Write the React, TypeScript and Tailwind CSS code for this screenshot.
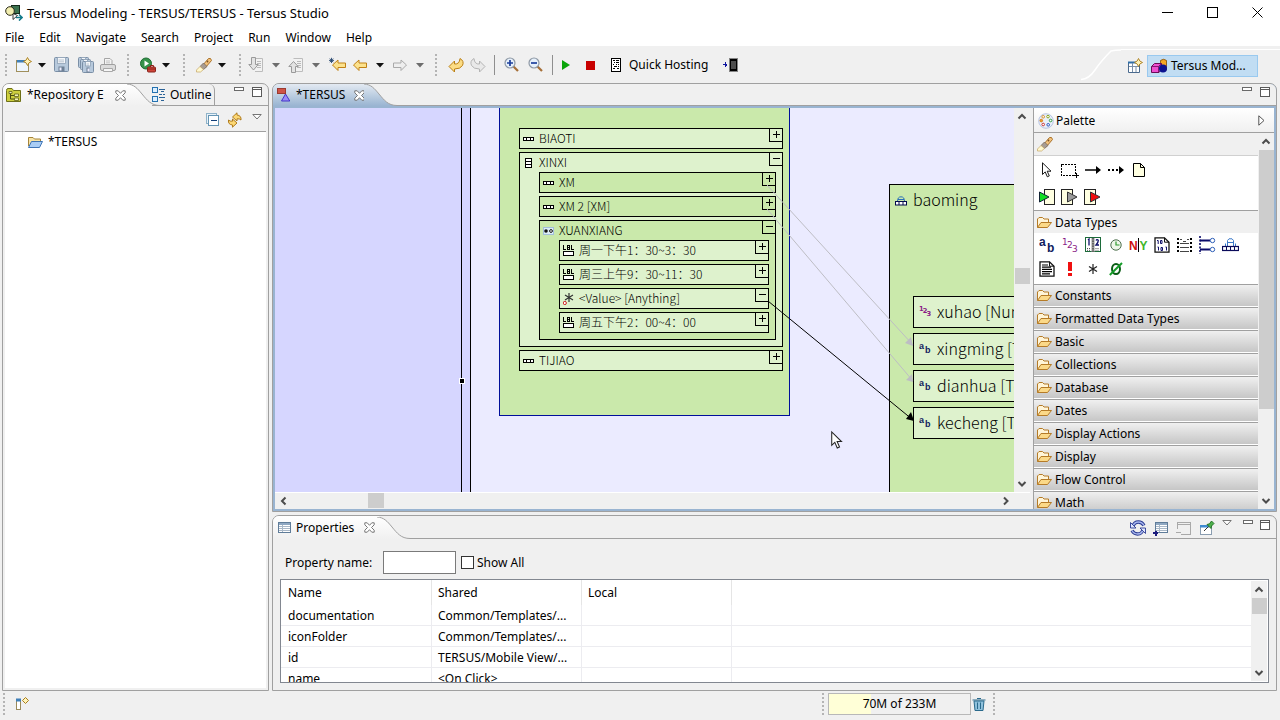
import type { ReactNode } from "react";

/* ---------- small drawing helpers ---------- */

function Svg({ children, w = 16, h = 16, smooth = false }: { children: ReactNode; w?: number; h?: number; smooth?: boolean }) {
  return (
    <svg
      width={w}
      height={h}
      viewBox={`0 0 ${w} ${h}`}
      fill="none"
      shapeRendering={smooth ? "auto" : "crispEdges"}
      className="block shrink-0"
      aria-hidden="true"
    >
      {children}
    </svg>
  );
}

const Caret = ({ dim = false }: { dim?: boolean }) => (
  <Svg w={8} h={5} smooth>
    <path d="M0 0H8L4 4.5Z" fill={dim ? "#6d6d6d" : "#111"} />
  </Svg>
);

const Grip = () => (
  <Svg w={3} h={22}>
    {[0, 4, 8, 12, 16, 20].map((y) => (
      <rect key={y} x="0" y={y} width="2" height="2" fill="#b4b4b4" />
    ))}
  </Svg>
);

const AppLogo = () => (
  <Svg w={18} h={16} smooth>
    <rect x="6.500" y=".5" width="8" height="8" fill="#3c7350" stroke="#152b1b" />
    <path d="M8 8.500V14.500L12.500 10.500Z" fill="#fff" stroke="#222" strokeWidth=".9" />
    <circle cx="5" cy="6" r="4.300" fill="#f2eeb0" stroke="#2c2c1a" />
    <path d="M11 12.500H17M14 9.500L17.200 12.500L14 15.500" stroke="#127a8a" strokeWidth="1.600" />
  </Svg>
);

const Sparkle = ({ x, y }: { x: number; y: number }) => (
  <path
    d={`M${x} ${y - 4}L${x + 1.4} ${y - 1.4}L${x + 4} ${y}L${x + 1.4} ${y + 1.4}L${x} ${y + 4}L${x - 1.4} ${y + 1.4}L${x - 4} ${y}L${x - 1.4} ${y - 1.4}Z`}
    fill="#fff3b8"
    stroke="#a87d1c"
    strokeWidth=".9"
  />
);

const NewIcon = () => (
  <Svg smooth>
    <rect x=".5" y="3.500" width="12" height="11" fill="#eef6fd" stroke="#a08f5c" />
    <rect x="1" y="3" width="11" height="2.500" fill="#3f7fb8" />
    <Sparkle x={11.5} y={4.5} />
  </Svg>
);

const Disk = ({ x = 0, y = 0, s = 14 }: { x?: number; y?: number; s?: number }) => (
  <g transform={`translate(${x} ${y})`}>
    <rect x=".5" y=".5" width={s} height={s} rx="1" fill="#b7c9dc" stroke="#7b8fa6" />
    <rect x="3.500" y=".5" width={s - 6} height={s / 2 - 1} fill="#f5f7fa" stroke="#8fa2b6" strokeWidth=".8" />
    <path d={`M4.500 3H${s - 4}M4.500 4.800H${s - 4}`} stroke="#a0b0c0" strokeWidth=".7" />
    <rect x="4.500" y={s - 4.5} width={s - 8} height="5" fill="#6f8196" />
    <rect x="5.500" y={s - 3.5} width="2" height="3" fill="#eef" />
  </g>
);
const SaveIcon = () => (
  <Svg smooth>
    <Disk />
  </Svg>
);
const SaveAllIcon = () => (
  <Svg smooth>
    <Disk s={10} />
    <Disk x={2} y={2} s={10} />
    <Disk x={4} y={4} s={11} />
  </Svg>
);
const PrintIcon = () => (
  <Svg smooth>
    <path d="M4.500 7V1.500H10L12 3.500V7" fill="#f4f4f4" stroke="#a5a5a5" />
    <path d="M6 4h4M6 5.800h4" stroke="#bbb" strokeWidth=".8" />
    <rect x=".5" y="7.500" width="15" height="6" rx="1.500" fill="#dcdcdc" stroke="#a0a0a0" />
    <path d="M3.500 11.500h9v3h-9z" fill="#f6f6f6" stroke="#a8a8a8" />
  </Svg>
);
const RunIcon = () => (
  <Svg smooth>
    <circle cx="6" cy="6.500" r="5.500" fill="#35924a" stroke="#1f6d33" />
    <path d="M4.500 3.500L9 6.500L4.500 9.500Z" fill="#fff" />
    <path d="M10.500 10V8.500H13.500V10" stroke="#8e2018" />
    <rect x="7.500" y="10" width="8" height="5" rx="1" fill="#cf4438" stroke="#86231b" />
    <path d="M8 12h7" stroke="#7a1c14" strokeWidth=".8" />
  </Svg>
);
const TorchIcon = () => (
  <Svg smooth>
    <path d="M6.500 8.500L12.500 1.500Q15 .5 15.500 3.500L9.500 10.500Z" fill="#f3c27c" stroke="#a9722b" />
    <path d="M4 9.500L7.500 6L11 9.500L7.500 12.500Z" fill="#a79c92" stroke="#7a6a5c" strokeWidth=".8" />
    <path d="M4 9.500L7.500 12.500L4.500 15H.5V13Z" fill="#fff9cf" stroke="#c4a564" strokeWidth=".7" />
    <circle cx="11.500" cy="4.500" r=".9" fill="#7a5326" />
  </Svg>
);
const PageArrow = ({ up = false }: { up?: boolean }) => (
  <Svg smooth>
    <path d="M5.500 1.500H14.500V14.500H7" fill="#f2f2f2" stroke="#bcbcbc" />
    <path d="M9 4.500h4M9 6.500h4M9 8.500h4M9 10.500h4" stroke="#b9b9b9" />
    {up ? (
      <path d="M3.500 15.500V9.500H.8L5.500 4.500L10.200 9.500H7.500V15.500Z" fill="#e3e3e3" stroke="#9a9a9a" />
    ) : (
      <path d="M3.500 .5V7.500H.8L5.500 13L10.200 7.500H7.500V.5Z" fill="#e3e3e3" stroke="#9a9a9a" />
    )}
  </Svg>
);
const ArrowLeft = ({ star = false }: { star?: boolean }) => (
  <Svg w={18} smooth>
    <path d="M2.500 8L8 3V6H15.500V10.500H8V13.500Z" fill="#fce28d" stroke="#c08116" transform={star ? "translate(1 0)" : undefined} />
    {star && <path d="M2.500 .8V6M0 3.400H5M.8 1.600L4.200 5.200M4.200 1.600L.8 5.200" stroke="#26466e" strokeWidth=".9" />}
  </Svg>
);
const ArrowRight = () => (
  <Svg smooth>
    <path d="M14.500 8L9 3V6H1.500V10.500H9V13.500Z" fill="#eeeeee" stroke="#a9a9a9" />
  </Svg>
);
const HookLeft = () => (
  <Svg smooth>
    <path d="M1 9.500L6.500 4V7Q11.500 7.500 12 1.500Q16.500 4 14.500 8.500Q12.500 12 6.500 12V15Z" fill="#fbdc85" stroke="#bb8014" />
  </Svg>
);
const HookRight = () => (
  <Svg smooth>
    <path d="M15 9.500L9.500 4V7Q4.500 7.500 4 1.500Q-.5 4 1.500 8.500Q3.500 12 9.500 12V15Z" fill="#e9e9e9" stroke="#b4b4b4" />
  </Svg>
);
const Lens = ({ plus = false }: { plus?: boolean }) => (
  <Svg smooth>
    <path d="M9.500 9.500L14 14" stroke="#a66f38" strokeWidth="2.200" />
    <circle cx="6" cy="6" r="5" fill="#e6f0fb" stroke="#8f99a5" strokeWidth="1.200" />
    <path d={plus ? "M3 6H9M6 3V9" : "M3 6H9"} stroke="#1d3f9c" strokeWidth="1.700" />
  </Svg>
);
const PlayIcon = () => (
  <Svg w={10} h={10} smooth>
    <path d="M1 0L9 5L1 10Z" fill="#0aa50a" />
  </Svg>
);
const StopIcon = () => (
  <Svg w={9} h={9}>
    <rect width="9" height="9" fill="#c80000" />
  </Svg>
);
const ServerIcon = () => (
  <Svg w={12} h={14}>
    <rect x="1.500" y=".5" width="9" height="13" fill="#fff" stroke="#000" />
    <path d="M3 2.500h2M6 2.500h3M4 4.500h1M6 4.500h3M3 6.500h1M6 6.500h1M8 6.500h1M4 8.500h3M8 8.500h1M3 10.500h2M7 10.500h2" stroke="#000" />
  </Svg>
);
const DeviceIcon = () => (
  <Svg w={16} h={14}>
    <rect x="6" y="0" width="9" height="14" fill="#858585" />
    <rect x="7" y="1" width="7" height="12" fill="#000" />
    <rect x="8" y="3" width="5" height="8" fill="#4d4d4d" />
    <path d="M0 6.500H3M2.500 4V9M3.500 5.500V7.500" stroke="#1017a0" />
  </Svg>
);
const PerspectiveIcon = () => (
  <Svg smooth>
    <path d="M1.500 4.500H12.500V14.500H1.500Z" fill="#fff" stroke="#4a6a8e" />
    <path d="M1 4.500H9" stroke="#2f6ea8" strokeWidth="2" />
    <path d="M5.500 5V14M2 8.500H12M9 8.500V14" stroke="#7b90a8" />
    <Sparkle x={11.5} y={4.5} />
  </Svg>
);
const ModelIcon = () => (
  <Svg w={17} h={16} smooth>
    <path d="M9.500 2.500Q12.500 0 15.500 2.500V12H9.500Z" fill="#f5a623" stroke="#7c4a05" strokeWidth=".8" />
    <path d="M.5 8.500L3.500 5.500H10.500V11L8 14.500H.5Z" fill="#ee4fd0" stroke="#6a0d57" />
    <path d="M.5 8.500H7.500V14.500M7.500 8.500L10.500 5.500" stroke="#6a0d57" strokeWidth=".8" />
    <circle cx="12" cy="10.500" r="4" fill="#0b1290" />
  </Svg>
);
const CloseTab = () => (
  <Svg w={11} h={11} smooth>
    <path
      d="M.8 .8H3.200L5.500 3.300L7.800 .8H10.200V2.800L7.500 5.500L10.200 8.200V10.200H7.800L5.500 7.700L3.200 10.200H.8V8.200L3.500 5.500L.8 2.800Z"
      fill="#fff"
      stroke="#6a6a6a"
      strokeWidth=".9"
    />
  </Svg>
);
const MinBox = () => (
  <Svg w={10} h={10}>
    <rect x=".5" y=".5" width="9" height="3" fill="#fff" stroke="#6a6a6a" />
  </Svg>
);
const MaxBox = () => (
  <Svg w={10} h={10}>
    <rect x=".5" y=".5" width="9" height="9" fill="#fff" stroke="#5a5a5a" />
    <path d="M0 2.500H10" stroke="#5a5a5a" />
  </Svg>
);
const ViewMenu = () => (
  <Svg w={10} h={6} smooth>
    <path d="M.8 .5H9.200L5 5Z" fill="#fff" stroke="#666" strokeWidth=".9" />
  </Svg>
);
const RepoIcon = () => (
  <Svg smooth>
    <path d="M.5 3.500Q.5 1.500 2 1.500H6L7.500 3.500H14.500V14.500H.5Z" fill="#cdcf3f" stroke="#6e7018" />
    <path d="M4.500 5.500V12H8M4.500 8.500H8" stroke="#4a4c10" />
    <path d="M3 4.500h3v2H3zM8.500 7h4v2.500h-4zM8.500 11h4v2.500h-4z" fill="#f4f5b8" stroke="#5f611a" strokeWidth=".8" />
  </Svg>
);
const OutlineIcon = () => (
  <Svg w={14} h={15}>
    <rect x=".5" y=".5" width="5" height="5" fill="#dcefff" stroke="#2472b0" />
    <rect x=".5" y="9.500" width="5" height="5" fill="#dcefff" stroke="#2472b0" />
    <path d="M7 2.500H13M9 4.500H12M7 7.500H10M11 7.500H13M7 10.500H13M9 13.500H12" stroke="#2b6296" />
  </Svg>
);
const CollapseIcon = () => (
  <Svg w={14} h={14}>
    <rect x=".5" y=".5" width="10" height="10" fill="#e9f2f9" stroke="#8fb3c9" />
    <rect x="2.500" y="2.500" width="10" height="10" fill="#fff" stroke="#6595b4" />
    <path d="M5 7.500H11" stroke="#123f78" strokeWidth="1" />
  </Svg>
);
const LinkIcon = () => (
  <Svg smooth>
    <path d="M5.500 5L10 .8V3Q14.500 3.500 14 8Q12.500 6.500 10 6.800V9Z" fill="#fbd774" stroke="#a9720f" strokeWidth=".9" />
    <path d="M10 11L5.500 15.200V13Q.8 12.500 1.500 8Q3 9.500 5.500 9.200V7Z" fill="#fbd774" stroke="#a9720f" strokeWidth=".9" />
  </Svg>
);
const ProjectFolder = () => (
  <Svg smooth>
    <path d="M1.500 12V3.500H6L7.500 5H13.500V8" fill="#f7e3a5" stroke="#a5843a" />
    <path d="M1.500 13.500L4.500 7.500H15.500L12.500 13.500Z" fill="#a9cdf5" stroke="#3e74b5" />
  </Svg>
);
const ModelTabIcon = () => (
  <Svg w={14} h={14} smooth>
    <rect x=".5" y=".5" width="8" height="5" fill="#cf5346" stroke="#9b3a30" />
    <path d="M8.500 6L12.800 13H4.500Z" fill="#9a8cf5" stroke="#4334c8" />
  </Svg>
);
const PropsIcon = ({ mark = false }: { mark?: boolean }) => (
  <Svg w={16} h={16}>
    <rect x="2.500" y="2.500" width="12" height="10" fill="#fff" stroke="#5f7c99" />
    <rect x="3" y="3" width="11" height="2" fill="#8fa8c2" />
    <path d="M3 6.500H14M3 8.500H14M3 10.500H14M6.500 5V12" stroke="#a9b8c8" />
    {mark && <path d="M0 13H5M2.500 11V16" stroke="#1b1b7d" strokeWidth="2" />}
  </Svg>
);
const MinusPane = () => (
  <Svg>
    <path d="M1.500 9V2.500H14.500V14.500H5" stroke="#a9a9a9" />
    <path d="M2 4.500H14M0 12.500H5" stroke="#a9a9a9" />
  </Svg>
);
const RefreshIcon = () => (
  <Svg smooth>
    <path d="M3 6.500Q4 2 8.500 2Q12 2 14 5.500" stroke="#2c3c92" strokeWidth="3.400" />
    <path d="M3 6.500Q4 2 8.500 2Q12 2 14 5.500" stroke="#a9b8f0" strokeWidth="1.400" />
    <path d="M13 9.500Q12 14 7.500 14Q4 14 2 10.500" stroke="#2c3c92" strokeWidth="3.400" />
    <path d="M13 9.500Q12 14 7.500 14Q4 14 2 10.500" stroke="#a9b8f0" strokeWidth="1.400" />
    <path d="M.5 2.500V8H6ZM15.500 13.500V8H10Z" fill="#dfe6ff" stroke="#2c3c92" strokeWidth=".9" />
  </Svg>
);
const PinIcon = () => (
  <Svg smooth>
    <rect x="1.500" y="5.500" width="11" height="9" fill="#fff" stroke="#8a9db0" />
    <rect x="1" y="5" width="9" height="2.500" fill="#3f8ad0" />
    <path d="M5 11L9.500 6.500" stroke="#333" />
    <path d="M8 4.500L12 8.500L12.500 6L15 3.500L12.500 1L10.500 3.800Z" fill="#4db04d" stroke="#1c6b1c" strokeWidth=".9" />
  </Svg>
);
const Chevron = ({ dir }: { dir: "up" | "down" | "left" | "right" }) => {
  const d = {
    up: "M1.500 6.500L5 3L8.500 6.500",
    down: "M1.500 3L5 6.500L8.500 3",
    left: "M6.500 1.500L3 5L6.500 8.500",
    right: "M3 1.500L6.500 5L3 8.500",
  }[dir];
  return (
    <Svg w={10} h={10} smooth>
      <path d={d} stroke="#4c4c4c" strokeWidth="2" />
    </Svg>
  );
};
const PaletteIcon = () => (
  <Svg smooth>
    <circle cx="8" cy="8" r="7.300" fill="#e9effa" stroke="#a9b9dd" strokeWidth=".8" />
    <circle cx="5.200" cy="3.800" r="1.300" fill="#fff" stroke="#d68f2a" />
    <circle cx="10" cy="3.600" r="1.300" fill="#fff" stroke="#8aa81e" />
    <circle cx="12.600" cy="7.500" r="1.300" fill="#fff" stroke="#2d9c3d" />
    <circle cx="10.200" cy="11.800" r="1.300" fill="#fff" stroke="#2757c4" />
    <circle cx="5.200" cy="11.500" r="1.300" fill="#fff" stroke="#c93434" />
    <circle cx="3.300" cy="7.600" r="1.300" fill="#f0a030" stroke="#d6801a" />
  </Svg>
);
const DrawerFolder = () => (
  <Svg smooth>
    <path d="M1.500 12.500V4L3 2.500H6.500L8 4H12.500V7" fill="#fff5d8" stroke="#b57b27" />
    <path d="M1.500 12.500L5 7.500H15.500L11.500 12.500Z" fill="#fbd988" stroke="#b57b27" />
  </Svg>
);
const PointerShape = "M1.500 .8V12.500L4.200 9.900L6.300 14.800L8.300 13.900L6.200 9.200H10Z";

const paletteTools: { name: string; icon: ReactNode }[][] = [
  [
    { name: "Select", icon: <Svg smooth><g transform="translate(2 0)"><path d={PointerShape} fill="#fff" stroke="#000" strokeWidth=".9" /></g></Svg> },
    { name: "Marquee", icon: <Svg w={18}><rect x=".5" y="2.500" width="14" height="11" stroke="#000" strokeDasharray="2 1" /><path d="M13 13.500H18M15.500 11V16" stroke="#000" /></Svg> },
    { name: "Flow", icon: <Svg smooth><path d="M0 8H12" stroke="#000" strokeWidth="1.600" /><path d="M11 4L16 8L11 12Z" fill="#000" /></Svg> },
    { name: "Link", icon: <Svg smooth><path d="M0 8H11" stroke="#000" strokeWidth="1.800" strokeDasharray="2 2" /><path d="M11 4L16 8L11 12Z" fill="#000" /></Svg> },
    { name: "Note", icon: <Svg smooth><path d="M2.500 1.500H9.500L13.500 5.500V14.500H2.500Z" fill="#ffffe1" stroke="#000" /><path d="M9.500 1.500V5.500H13.500" stroke="#000" /></Svg> },
  ],
  [
    { name: "Trigger", icon: <Svg smooth><rect x="5.500" y=".5" width="10" height="15" fill="#ffffe1" stroke="#222" /><path d="M.5 3L10 8L.5 13Z" fill="#12e022" stroke="#123" /></Svg> },
    { name: "Exit", icon: <Svg w={17} smooth><rect x=".5" y=".5" width="11" height="15" fill="#ffffe1" stroke="#222" /><path d="M6.500 3L16 8L6.500 13Z" fill="#9b9b9b" stroke="#333" /></Svg> },
    { name: "Error Exit", icon: <Svg w={17} smooth><rect x=".5" y=".5" width="11" height="15" fill="#ffffe1" stroke="#222" /><path d="M6.500 3L16 8L6.500 13Z" fill="#f00e0e" stroke="#333" /></Svg> },
  ],
];

const AbIcon = ({ size = 16 }: { size?: number }) => (
  <svg width={size} height={size} viewBox="0 0 16 16" className="block shrink-0" aria-hidden="true">
    <g fontSize="12" fill="#10205e" className="font-[family-name:'Liberation_Sans'] font-bold">
      <text x="0" y="9">a</text>
      <text x="8" y="15">b</text>
    </g>
  </svg>
);
const NumIcon = ({ size = 16 }: { size?: number }) => (
  <svg width={size} height={size} viewBox="0 0 16 16" className="block shrink-0" aria-hidden="true">
    <g fontSize="9" fill="#8a1a86" className={size < 16 ? "font-[family-name:'DejaVu_Sans'] font-bold" : "font-[family-name:'DejaVu_Sans']"}>
      <text x="0" y="8">1</text>
      <text x="5" y="11">2</text>
      <text x="10" y="14.500">3</text>
    </g>
  </svg>
);

const dataTypes: { name: string; icon: ReactNode }[] = [
  { name: "Text", icon: <AbIcon /> },
  { name: "Number", icon: <NumIcon /> },
  {
    name: "Date",
    icon: (
      <Svg smooth>
        <rect x=".5" y=".5" width="15" height="14" fill="#fff" stroke="#1c6b3a" />
        <rect x="6.500" y="1" width="3" height="14" fill="#9a9a9a" />
        <path d="M8 1V15" stroke="#333" strokeDasharray="1.500 1" />
        <path d="M3 3L4 2V8.500M11 3.500Q12 1.800 13.300 3.200Q13.500 5 11 8H14" stroke="#10106a" strokeWidth="1.300" />
        <path d="M2 11.500H6M10.500 11.500H14.500M2 13.300H6M10.500 13.300H14.500" stroke="#555" strokeDasharray="1 1" />
      </Svg>
    ),
  },
  {
    name: "Time",
    icon: (
      <Svg w={12} h={12} smooth>
        <circle cx="6" cy="6" r="5.200" fill="#eef7e8" stroke="#4e6f4e" />
        <path d="M6 2.500V6H9.500" stroke="#2d9c2d" strokeWidth="1.200" />
      </Svg>
    ),
  },
  {
    name: "Yes No",
    icon: (
      <Svg w={19} smooth>
        <text x="0" y="13" fontSize="12" fill="#cc1010" className="font-[family-name:'Liberation_Sans'] font-bold">N</text>
        <path d="M9.500 1V15" stroke="#000" />
        <text x="10.500" y="13" fontSize="12" fill="#3fb52a" className="font-[family-name:'Liberation_Sans'] font-bold">Y</text>
      </Svg>
    ),
  },
  {
    name: "Binary",
    icon: (
      <Svg smooth>
        <path d="M1 .8H10.500L15 5.200V15.200H1Z" fill="#fff" stroke="#111" strokeWidth="1.300" />
        <path d="M10.500 .8V5.200H15" stroke="#111" />
        <path d="M3 3.500h1.200V7M3.500 10h1V13.500M8.500 10.500h-1.500v3h1.500zM6.500 3.500h1.500v3h-1.500zM11.500 10h1V13.500" stroke="#10106a" />
      </Svg>
    ),
  },
  {
    name: "Table",
    icon: (
      <Svg w={15} h={15}>
        <path d="M0 1H2M13 1H15M0 5H2M13 5H15M0 9H2M13 9H15M0 13H2M13 13H15" stroke="#000" strokeWidth="2" />
        <path d="M3 1.500H5M6 3.500H9M10 1.500H12M3 5.500H12M3 9.500H12M3 13.500H12" stroke="#444" />
      </Svg>
    ),
  },
  {
    name: "Branch",
    icon: (
      <Svg w={17} h={18} smooth>
        <path d="M1 0V18" stroke="#0b0b6a" strokeWidth="1.600" strokeDasharray="2 1.500" />
        <path d="M1 4.500H11M1 13.500H11" stroke="#0b0b6a" strokeWidth="1.800" />
        <circle cx="13.500" cy="4.500" r="2.200" fill="#fff" stroke="#2e5fb8" />
        <circle cx="13.500" cy="13.500" r="2.200" fill="#fff" stroke="#2e5fb8" />
      </Svg>
    ),
  },
  {
    name: "Database record",
    icon: (
      <Svg w={17} h={14} smooth>
        <path d="M5.500 8V2.500L7 .8H10L11.500 2.500V8M3.500 5.500V8M13.500 5.500V8M5.500 4.500H11.500" stroke="#3c7ac9" />
        <rect x=".5" y="8.500" width="16" height="4" fill="#fff" stroke="#0b0b5a" strokeWidth="1.200" />
        <path d="M4.500 8V13M8.500 8V13M12.500 8V13" stroke="#0b0b5a" />
      </Svg>
    ),
  },
  {
    name: "Document",
    icon: (
      <Svg smooth>
        <path d="M1 .8H10.500L15 5.200V15.200H1Z" fill="#fff" stroke="#111" strokeWidth="1.300" />
        <path d="M10.500 .8V5.200H15" stroke="#111" />
        <path d="M3 4H9M3 6.200H12M3 8.400H13M3 10.600H13M3 12.800H11" stroke="#000" strokeWidth="1.200" />
      </Svg>
    ),
  },
  {
    name: "Error",
    icon: (
      <Svg w={6} h={14}>
        <rect x="1" y="0" width="4" height="9" fill="#f01010" />
        <rect x="1" y="11" width="4" height="3" fill="#f01010" />
      </Svg>
    ),
  },
  {
    name: "Anything",
    icon: (
      <Svg w={12} h={12} smooth>
        <path d="M6 1V11M2 3.500L10 8.500M10 3.500L2 8.500" stroke="#222" strokeWidth="1.200" />
      </Svg>
    ),
  },
  {
    name: "Nothing",
    icon: (
      <Svg w={14} h={14} smooth>
        <ellipse cx="7" cy="7" rx="4" ry="5" stroke="#0b5d16" strokeWidth="2" />
        <path d="M.8 13L13 1" stroke="#149c28" strokeWidth="2" />
      </Svg>
    ),
  },
];

const drawers = ["Constants", "Formatted Data Types", "Basic", "Collections", "Database", "Dates", "Display Actions", "Display", "Flow Control", "Math"];

/* ---------- window chrome ---------- */

function IconButton({ label, className, children }: { label: string; className?: string; children: ReactNode }) {
  return (
    <button type="button" aria-label={label} className={`flex shrink-0 items-center justify-center ${className ?? ""}`}>
      {children}
    </button>
  );
}

function TitleBar() {
  return (
    <header className="flex h-[25px] shrink-0 items-center bg-white">
      <div className="flex flex-1 items-center gap-1 pl-[5px]">
        <AppLogo />
        <h1 className="text-[13px]">Tersus Modeling - TERSUS/TERSUS - Tersus Studio</h1>
      </div>
      <IconButton label="Minimize window" className="h-full w-[45px]">
        <Svg w={11} h={11}><path d="M0 5.500H11" stroke="#000" /></Svg>
      </IconButton>
      <IconButton label="Maximize window" className="h-full w-[45px]">
        <Svg w={11} h={11}><rect x=".5" y=".5" width="10" height="10" stroke="#000" /></Svg>
      </IconButton>
      <IconButton label="Close window" className="h-full w-[45px]">
        <Svg w={11} h={11} smooth><path d="M.5 .5L10.500 10.500M10.500 .5L.5 10.500" stroke="#000" /></Svg>
      </IconButton>
    </header>
  );
}

function MenuBar() {
  return (
    <nav className="flex h-[21px] shrink-0 items-center gap-[15px] bg-white px-[5px] pb-px pt-[5px]">
      {["File", "Edit", "Navigate", "Search", "Project", "Run", "Window", "Help"].map((m) => (
        <button type="button" key={m}>{m}</button>
      ))}
    </nav>
  );
}

const Separator = ({ className }: { className: string }) => (
  <span className={`flex shrink-0 justify-center ${className}`}><span className="h-5 w-px bg-[#8f8f8f]" /></span>
);
const ToolGrip = ({ className }: { className: string }) => (
  <span className={`flex shrink-0 justify-center ${className}`}><Grip /></span>
);

function ToolBar() {
  return (
    <div className="flex h-[37px] shrink-0 items-stretch">
      <div className="flex min-w-0 flex-1 items-center pt-px" role="toolbar">
        <ToolGrip className="w-3" />
        <IconButton label="New" className="w-6"><NewIcon /></IconButton>
        <IconButton label="New options" className="w-3"><Caret /></IconButton>
        <IconButton label="Save" className="w-7"><SaveIcon /></IconButton>
        <IconButton label="Save all" className="w-5"><SaveAllIcon /></IconButton>
        <IconButton label="Print" className="w-6"><PrintIcon /></IconButton>
        <ToolGrip className="w-4" />
        <IconButton label="Run external tool" className="w-6"><RunIcon /></IconButton>
        <IconButton label="External tool options" className="w-3"><Caret /></IconButton>
        <ToolGrip className="w-6" />
        <IconButton label="Search" className="w-4"><TorchIcon /></IconButton>
        <IconButton label="Search options" className="w-5"><Caret /></IconButton>
        <ToolGrip className="w-4" />
        <IconButton label="Next annotation" className="w-4"><PageArrow /></IconButton>
        <IconButton label="Next annotation options" className="w-6"><Caret dim /></IconButton>
        <IconButton label="Previous annotation" className="w-4"><PageArrow up /></IconButton>
        <IconButton label="Previous annotation options" className="w-6"><Caret dim /></IconButton>
        <IconButton label="Last edit location" className="w-5"><ArrowLeft star /></IconButton>
        <IconButton label="Back" className="w-6"><ArrowLeft /></IconButton>
        <IconButton label="Back options" className="w-4"><Caret /></IconButton>
        <IconButton label="Forward" className="w-6"><ArrowRight /></IconButton>
        <IconButton label="Forward options" className="w-4"><Caret dim /></IconButton>
        <ToolGrip className="w-4" />
        <IconButton label="Undo" className="w-6"><HookLeft /></IconButton>
        <IconButton label="Redo" className="w-5"><HookRight /></IconButton>
        <Separator className="w-3" />
        <IconButton label="Zoom in" className="w-6"><Lens plus /></IconButton>
        <IconButton label="Zoom out" className="w-6"><Lens /></IconButton>
        <Separator className="w-2" />
        <IconButton label="Start" className="w-5"><PlayIcon /></IconButton>
        <IconButton label="Stop" className="w-7"><StopIcon /></IconButton>
        <IconButton label="Server" className="w-6"><ServerIcon /></IconButton>
        <button type="button" className="px-px">Quick Hosting</button>
        <IconButton label="Mobile preview" className="ml-3 w-5"><DeviceIcon /></IconButton>
      </div>
      <svg width="40" height="37" viewBox="0 0 40 37" fill="none" className="shrink-0" aria-hidden="true">
        <path d="M0 33.500Q8 33 14 24T30 5Q34 4 40 4" stroke="#fff" strokeWidth="1.500" />
      </svg>
      <div className="mt-[3px] flex items-center gap-1 border-t border-white pb-0.5 pl-[6px] pr-[22px]">
        <IconButton label="Open perspective"><PerspectiveIcon /></IconButton>
        <button type="button" className="flex h-[22px] w-[111px] items-center gap-[3px] border border-[#99c9ef] bg-[#c1ddf3] pl-[3px]">
          <ModelIcon />
          Tersus Mod...
        </button>
      </div>
    </div>
  );
}

/* Curved right edge of a selected tab. */
function TabCurve({ blue = false }: { blue?: boolean }) {
  const id = blue ? "curve-blue" : "curve-plain";
  return (
    <svg width="33" height="22" viewBox="0 0 33 22" fill="none" className="block shrink-0" aria-hidden="true">
      <defs>
        <linearGradient id={id} x1="0" y1="0" x2="0" y2="1">
          <stop offset="0" stopColor={blue ? "#e3eaf2" : "#ffffff"} />
          <stop offset="1" stopColor={blue ? "#99b4d1" : "#f0f0f0"} />
        </linearGradient>
      </defs>
      <path d="M0 0C7 .5 10 4 15 10S24 21.500 33 21.500V22H0Z" fill={`url(#${id})`} />
      <path d="M0 0C7 .5 10 4 15 10S24 21.500 33 21.500" stroke="#a0a0a0" />
    </svg>
  );
}

const plainTab = "bg-linear-to-b from-white to-[#f0f0f0]";
const blueTab = "bg-linear-to-b from-[#e3eaf2] to-[#99b4d1]";

function PaneButtons() {
  return (
    <>
      <IconButton label="Minimize pane"><MinBox /></IconButton>
      <IconButton label="Maximize pane"><MaxBox /></IconButton>
    </>
  );
}

function ScrollBar({ thumb, before, horizontal = false }: { thumb: string; before: string; horizontal?: boolean }) {
  return horizontal ? (
    <div className="flex h-[15px] min-w-0 flex-1 items-center bg-[#f0f0f0]">
      <IconButton label="Scroll left" className="h-[15px] w-[17px]"><Chevron dir="left" /></IconButton>
      <span className={before} />
      <span className={`h-[15px] bg-[#cdcdcd] ${thumb}`} />
      <span className="flex-1" />
      <IconButton label="Scroll right" className="h-[15px] w-[17px]"><Chevron dir="right" /></IconButton>
    </div>
  ) : (
    <div className="flex w-4 shrink-0 flex-col items-center bg-[#f0f0f0]">
      <IconButton label="Scroll up" className="h-[17px] w-4"><Chevron dir="up" /></IconButton>
      <span className={before} />
      <span className={`w-[15px] bg-[#cdcdcd] ${thumb}`} />
      <span className="flex-1" />
      <IconButton label="Scroll down" className="h-[17px] w-4"><Chevron dir="down" /></IconButton>
    </div>
  );
}

/* ---------- repository view ---------- */

function RepositoryPane() {
  return (
    <aside className="flex w-[267px] shrink-0 flex-col overflow-hidden rounded-t-[7px] border border-[#a0a0a0] bg-[#f0f0f0]">
      <div className="flex h-[22px] shrink-0">
        <button type="button" className={`flex items-center gap-[5px] pl-[3px] ${plainTab}`}>
          <RepoIcon />
          <span className="w-[79px] text-left">*Repository E</span>
        </button>
        <span className={`flex w-[21px] items-center justify-end pr-px ${plainTab}`}><CloseTab /></span>
        <TabCurve />
        <div className="-ml-2 flex flex-1">
          <button type="button" className="flex items-center gap-1 rounded-tr-[6px] border-b border-r border-[#a0a0a0] pr-0.5">
            <OutlineIcon />
            Outline
          </button>
          <div className="flex flex-1 items-start justify-end gap-2 border-b border-[#a0a0a0] pr-[6px] pt-[3px]">
            <PaneButtons />
          </div>
        </div>
      </div>
      <div className="flex h-[25px] shrink-0 items-center justify-end gap-[7px] pr-[6px] pt-0.5">
        <IconButton label="Collapse all"><CollapseIcon /></IconButton>
        <IconButton label="Link with editor"><LinkIcon /></IconButton>
        <IconButton label="View menu" className="ml-0.5 pb-1.5"><ViewMenu /></IconButton>
      </div>
      <div className="mx-[2px] mb-[2px] flex-1 border-t border-[#a0a0a0] bg-white">
        <ul>
          <li className="flex h-5 items-center gap-[5px] pl-[22px]">
            <ProjectFolder />
            *TERSUS
          </li>
        </ul>
      </div>
    </aside>
  );
}

/* ---------- diagram ---------- */

const BarIcon = () => (
  <Svg w={11} h={4}>
    <rect x=".5" y=".5" width="10" height="3" fill="#fff" stroke="#000" />
    <path d="M3.500 0V4M7.500 0V4" stroke="#000" />
  </Svg>
);
const StackIcon = () => (
  <Svg w={11} h={10}>
    <rect x="2.500" y=".5" width="6" height="9" fill="#fff" stroke="#000" />
    <path d="M2 3.500H9M2 6.500H9" stroke="#000" />
  </Svg>
);
const ChooserIcon = () => (
  <Svg w={11} h={8} smooth>
    <rect x=".5" y=".5" width="10" height="7" fill="#dceef8" stroke="#a4bfdc" />
    <circle cx="3" cy="4" r="1.800" fill="#111" />
    <circle cx="8" cy="4" r="1.400" fill="#fff" stroke="#111" />
  </Svg>
);
const LabelIcon = () => (
  <Svg w={11} h={11}>
    <path d="M.5 0V4.500H3M8.500 0V4.500H11" stroke="#000" />
    <path d="M4.500 .5H6.500V4.500H4.500ZM4 2.500H7" stroke="#000" />
    <rect x=".5" y="6.500" width="10" height="4" fill="#fff" stroke="#000" />
  </Svg>
);
const ValueIcon = () => (
  <Svg w={11} h={12} smooth>
    <path d="M6 0V9M2 2L10 7M10 2L2 7" stroke="#333" strokeWidth="1.200" />
    <circle cx="1.800" cy="10" r="1.600" fill="#fff" stroke="#d02020" />
  </Svg>
);

function NodeHeader({ icon, title, open = false }: { icon: ReactNode; title: string; open?: boolean }) {
  return (
    <div className="flex h-[19px] items-center gap-[5px] pl-[3px]">
      {icon}
      <span className="flex-1 whitespace-nowrap pb-0.5">{title}</span>
      <button type="button" aria-label={open ? `Collapse ${title}` : `Expand ${title}`} className="flex size-[13px] items-center justify-center self-start border-b border-l border-black pb-0.5">
        <Svg w={7} h={7}><path d={open ? "M0 3.500H7" : "M0 3.500H7M3.500 0V7"} stroke="#000" /></Svg>
      </button>
    </div>
  );
}

const light = "bg-[#def2cd]";
const green = "bg-[#cae9ab]";

function DisplayNode() {
  return (
    <div className={`absolute -top-2 left-56 flex h-[316px] w-[291px] flex-col gap-[3px] border border-[#000f9a] ${green} pl-[19px] pr-[6px] pt-[27px] font-[family-name:'Noto_Sans_CJK_SC','Liberation_Sans',sans-serif] text-[12px] font-light leading-4`}>
      <div className={`border border-black ${light}`}><NodeHeader icon={<BarIcon />} title="BIAOTI" /></div>
      <div className={`border border-black ${light}`}>
        <NodeHeader icon={<StackIcon />} title="XINXI" open />
        <div className="flex flex-col gap-[3px] pb-[6px] pl-[19px] pr-[6px]">
          <div className={`border border-black ${green}`}><NodeHeader icon={<BarIcon />} title="XM" /></div>
          <div className={`border border-black ${green}`}><NodeHeader icon={<BarIcon />} title="XM 2 [XM]" /></div>
          <div className={`border border-black ${green}`}>
            <NodeHeader icon={<ChooserIcon />} title="XUANXIANG" open />
            <div className="flex flex-col gap-[3px] pb-[6px] pl-[19px] pr-[6px]">
              <div className={`border border-black ${light}`}><NodeHeader icon={<LabelIcon />} title="周一下午1：30~3：30" /></div>
              <div className={`border border-black ${light}`}><NodeHeader icon={<LabelIcon />} title="周三上午9：30~11：30" /></div>
              <div className={`border border-black ${light}`}><NodeHeader icon={<ValueIcon />} title="<Value> [Anything]" open /></div>
              <div className={`border border-black ${light}`}><NodeHeader icon={<LabelIcon />} title="周五下午2：00~4：00" /></div>
            </div>
          </div>
        </div>
      </div>
      <div className={`border border-black ${light}`}><NodeHeader icon={<BarIcon />} title="TIJIAO" /></div>
    </div>
  );
}

function RecordNode() {
  const fields = [
    { icon: <NumIcon size={12} />, text: "xuhao [Number]" },
    { icon: <AbIcon size={12} />, text: "xingming [Text]" },
    { icon: <AbIcon size={12} />, text: "dianhua [Text]" },
    { icon: <AbIcon size={12} />, text: "kecheng [Text]" },
  ];
  return (
    <div className={`absolute left-[614px] top-[76px] h-[400px] w-[220px] border border-black ${green} font-[family-name:'Noto_Sans_CJK_SC','Liberation_Sans',sans-serif] text-[16px] font-light leading-5`}>
      <div className="flex h-[111px] items-start gap-[6px] pl-[5px] pt-1">
        <span className="flex h-6 items-center">
          <Svg w={12} h={10} smooth>
            <path d="M2.500 5.500Q2.500 .8 6 .8T9.500 5.500M3 3.500H9" stroke="#2a70b8" />
            <rect x=".5" y="5.500" width="11" height="3.500" fill="#fff" stroke="#000a4a" />
            <path d="M4 5V9M8 5V9" stroke="#000a4a" />
          </Svg>
        </span>
        baoming
      </div>
      <div className="flex flex-col gap-[5px] pl-[23px]">
        {fields.map((f) => (
          <div key={f.text} className={`flex h-8 items-center gap-[6px] whitespace-nowrap border border-black ${light} pb-0.5 pl-[5px]`}>
            {f.icon}
            {f.text}
          </div>
        ))}
      </div>
    </div>
  );
}

function Diagram() {
  return (
    <div className="relative min-h-0 min-w-0 flex-1 overflow-hidden bg-[#ebebff]">
      <div className="absolute inset-y-0 left-0 w-[196px] border-r border-black bg-[#d6d6ff]" />
      <div className="absolute inset-y-0 left-[186px] w-px bg-black" />
      <div className="absolute left-[184px] top-[270px] size-[6px] border border-white bg-black" />
      <DisplayNode />
      <RecordNode />
      <svg className="absolute inset-0 size-full" fill="none" aria-hidden="true">
        <path d="M492 77L638 237M492 101L638 273" stroke="#bdbdc4" />
        <path d="M638 238L630 235L636 229ZM638 274L631 272L637 266Z" fill="#bdbdc4" />
        <path d="M493 193L638 312" stroke="#000" />
        <path d="M639 313L631 311L636 304Z" fill="#000" />
        <path d={PointerShape} fill="#fff" stroke="#222" strokeWidth=".9" transform="translate(555 323) scale(1.150)" />
      </svg>
    </div>
  );
}

function Palette() {
  return (
    <section className="flex w-[241px] shrink-0 flex-col border-l border-[#a0a0a0] bg-white">
      <div className="flex h-[25px] shrink-0 items-center gap-[2px] border-b border-[#a0a0a0] bg-linear-to-b from-white to-[#f0f0f0] pl-1 pt-px">
        <PaletteIcon />
        <h2 className="flex-1">Palette</h2>
        <IconButton label="Collapse palette" className="pr-[9px]">
          <Svg w={7} h={11} smooth><path d="M.8 .8V10.200L6 5.500Z" fill="#fff" stroke="#555" /></Svg>
        </IconButton>
      </div>
      <div className="flex min-h-0 flex-1">
        <div className="min-w-0 flex-1 overflow-hidden">
          <div className="flex h-[23px] items-center border-b border-[#d0d0d0] bg-[#f0f0f0] pl-[3px]"><TorchIcon /></div>
          <div className="h-[54px] pl-px">
            {paletteTools.map((row, i) => (
              <div key={i} className="flex h-[27px] items-center">
                {row.map((t) => (
                  <IconButton key={t.name} label={t.name} className="w-[23px]">{t.icon}</IconButton>
                ))}
              </div>
            ))}
          </div>
          <button type="button" className="flex h-[23px] w-full items-center gap-[3px] border-t border-[#a0a0a0] bg-[#f0f0f0] pl-[2px] pt-0.5">
            <DrawerFolder />
            Data Types
          </button>
          <div className="flex h-[51px] flex-wrap content-start pl-px">
            {dataTypes.map((t) => (
              <IconButton key={t.name} label={t.name} className="h-6 w-[23px]">{t.icon}</IconButton>
            ))}
          </div>
          {drawers.map((d) => (
            <div key={d} className="border-b border-t border-b-white border-t-[#a0a0a0]">
              <button type="button" className="flex h-[21px] w-full items-center gap-[3px] bg-linear-to-b from-[#f0f0f0] to-[#c6c6c6] pl-[2px]">
                <DrawerFolder />
                {d}
              </button>
            </div>
          ))}
        </div>
        <ScrollBar before="h-0" thumb="h-[259px]" />
      </div>
    </section>
  );
}

function EditorPane() {
  return (
    <section className="flex min-h-0 flex-1 flex-col overflow-hidden rounded-t-[7px] border border-[#a0a0a0] bg-[#99b4d1]">
      <div className="flex h-[22px] shrink-0 bg-[#f0f0f0]">
        <button type="button" className={`flex items-center gap-[5px] pl-1 ${blueTab}`}>
          <ModelTabIcon />
          <span className="w-[50px] text-left">*TERSUS</span>
        </button>
        <span className={`flex w-5 items-center justify-end pr-px ${blueTab}`}><CloseTab /></span>
        <span className="-ml-0.5"><TabCurve blue /></span>
        <div className="flex flex-1 items-start justify-end gap-2 border-b border-[#a0a0a0] pr-[6px] pt-[3px]"><PaneButtons /></div>
      </div>
      <div className="flex min-h-0 flex-1 p-[2px]">
        <div className="flex min-w-0 flex-1 flex-col bg-[#f0f0f0] pr-[3px]">
          <div className="flex min-h-0 flex-1">
            <Diagram />
            <ScrollBar before="h-[143px]" thumb="h-4" />
          </div>
          <div className="flex border-t border-white pb-px pr-4">
            <ScrollBar horizontal before="w-[76px]" thumb="w-4" />
          </div>
        </div>
        <Palette />
      </div>
    </section>
  );
}

/* ---------- properties view ---------- */

const properties = [
  ["documentation", "Common/Templates/...", ""],
  ["iconFolder", "Common/Templates/...", ""],
  ["id", "TERSUS/Mobile View/...", ""],
  ["name", "<On Click>", ""],
];

function PropertiesPane() {
  return (
    <section className="flex h-[176px] shrink-0 flex-col overflow-hidden rounded-t-[7px] border border-[#a0a0a0] bg-[#f0f0f0]">
      <div className="flex h-[23px] shrink-0 items-stretch">
        <button type="button" className={`flex items-center gap-1 pl-[3px] ${plainTab}`}>
          <PropsIcon />
          <span className="w-[61px] text-left">Properties</span>
        </button>
        <span className={`flex w-[22px] items-center justify-end pr-1 ${plainTab}`}><CloseTab /></span>
        <span className="-ml-0.5 pt-px"><TabCurve /></span>
        <div className="flex flex-1 items-start justify-end gap-[7px] border-b border-[#a0a0a0] pr-[6px] pt-1">
          <IconButton label="Refresh"><RefreshIcon /></IconButton>
          <IconButton label="Add property"><PropsIcon mark /></IconButton>
          <IconButton label="Remove property"><MinusPane /></IconButton>
          <IconButton label="Pin view"><PinIcon /></IconButton>
          <IconButton label="View menu" className="mr-1"><ViewMenu /></IconButton>
          <PaneButtons />
        </div>
      </div>
      <form className="flex h-10 shrink-0 items-center pl-3 pt-1.5">
        <label htmlFor="property-name" className="w-[98px] pt-0.5">Property name:</label>
        <input id="property-name" type="text" className="h-[23px] w-[73px] border border-[#7a7a7a] bg-white px-1 outline-none" />
        <input id="show-all" type="checkbox" className="ml-[5px] size-[13px] appearance-none border border-[#333] bg-white" />
        <label htmlFor="show-all" className="ml-[3px] pt-0.5">Show All</label>
      </form>
      <div className="mx-[7px] mb-[7px] flex min-h-0 flex-1 border border-[#828790] bg-white">
        <div className="min-w-0 flex-1 overflow-hidden">
          <table className="w-full table-fixed border-separate border-spacing-0 text-left">
            <colgroup>
              <col className="w-[151px]" />
              <col className="w-[150px]" />
              <col className="w-[150px]" />
              <col />
            </colgroup>
            <thead>
              <tr className="h-[25px]">
                {["Name", "Shared", "Local"].map((h) => (
                  <th key={h} className="border-r border-[#e5e5e5] px-[6px] py-0 font-normal first:pl-[7px]">{h}</th>
                ))}
                <th aria-label="Spacer" />
              </tr>
            </thead>
            <tbody>
              {properties.map((row) => (
                <tr key={row[0]} className="h-[21px]">
                  {row.map((c, i) => (
                    <td key={i} className="whitespace-nowrap border-b border-r border-[#ececf0] px-[6px] pb-0 pt-0.5 first:pl-[7px]">{c}</td>
                  ))}
                  <td className="border-b border-[#ececf0]" />
                </tr>
              ))}
            </tbody>
          </table>
        </div>
        <div className="flex py-px pr-px"><ScrollBar before="h-0" thumb="h-4" /></div>
      </div>
    </section>
  );
}

function StatusBar() {
  return (
    <footer className="flex h-[29px] shrink-0 items-center pb-1">
      <span className="flex w-2 justify-center"><Grip /></span>
      <IconButton label="Show view as fast view" className="ml-[7px]">
        <Svg smooth>
          <rect x="1.500" y="3.500" width="4" height="10" fill="#fff" stroke="#9a8a5a" />
          <rect x="1" y="2.500" width="5" height="3" fill="#3f7fb8" />
          <path d="M10.500 1.500L13.500 4.500L10.500 7.500L7.500 4.500Z" fill="#fff3b8" stroke="#a87d1c" />
        </Svg>
      </IconButton>
      <span className="flex-1" />
      <Grip />
      <div className="ml-[3px] flex h-[22px] w-[143px] border border-[#b8b8b8] bg-linear-to-r from-[#ffffd7] from-30% to-[#f0f0f0] to-30%">
        <span className="flex-1 self-center text-center">70M of 233M</span>
      </div>
      <IconButton label="Run garbage collector">
        <Svg smooth>
          <path d="M3 5H13L12 14.500H4Z" fill="#8fc1dc" stroke="#2a6a8c" />
          <path d="M1.500 4H14.500M6 2.500H10M6.500 6.500V13M9.500 6.500V13" stroke="#2a6a8c" />
        </Svg>
      </IconButton>
      <span className="ml-[6px] mr-[284px]"><Grip /></span>
    </footer>
  );
}

export default function App() {
  return (
    <div className="flex h-screen min-h-[560px] flex-col overflow-hidden bg-[#f0f0f0] font-[family-name:'Noto_Sans','Noto_Sans_CJK_SC',sans-serif] text-[12px] leading-4 text-black">
      <TitleBar />
      <MenuBar />
      <ToolBar />
      <main className="flex min-h-0 flex-1 gap-[3px] pl-[2px] pr-[3px]">
        <RepositoryPane />
        <div className="flex min-w-0 flex-1 flex-col gap-[3px]">
          <EditorPane />
          <PropertiesPane />
        </div>
      </main>
      <StatusBar />
    </div>
  );
}
